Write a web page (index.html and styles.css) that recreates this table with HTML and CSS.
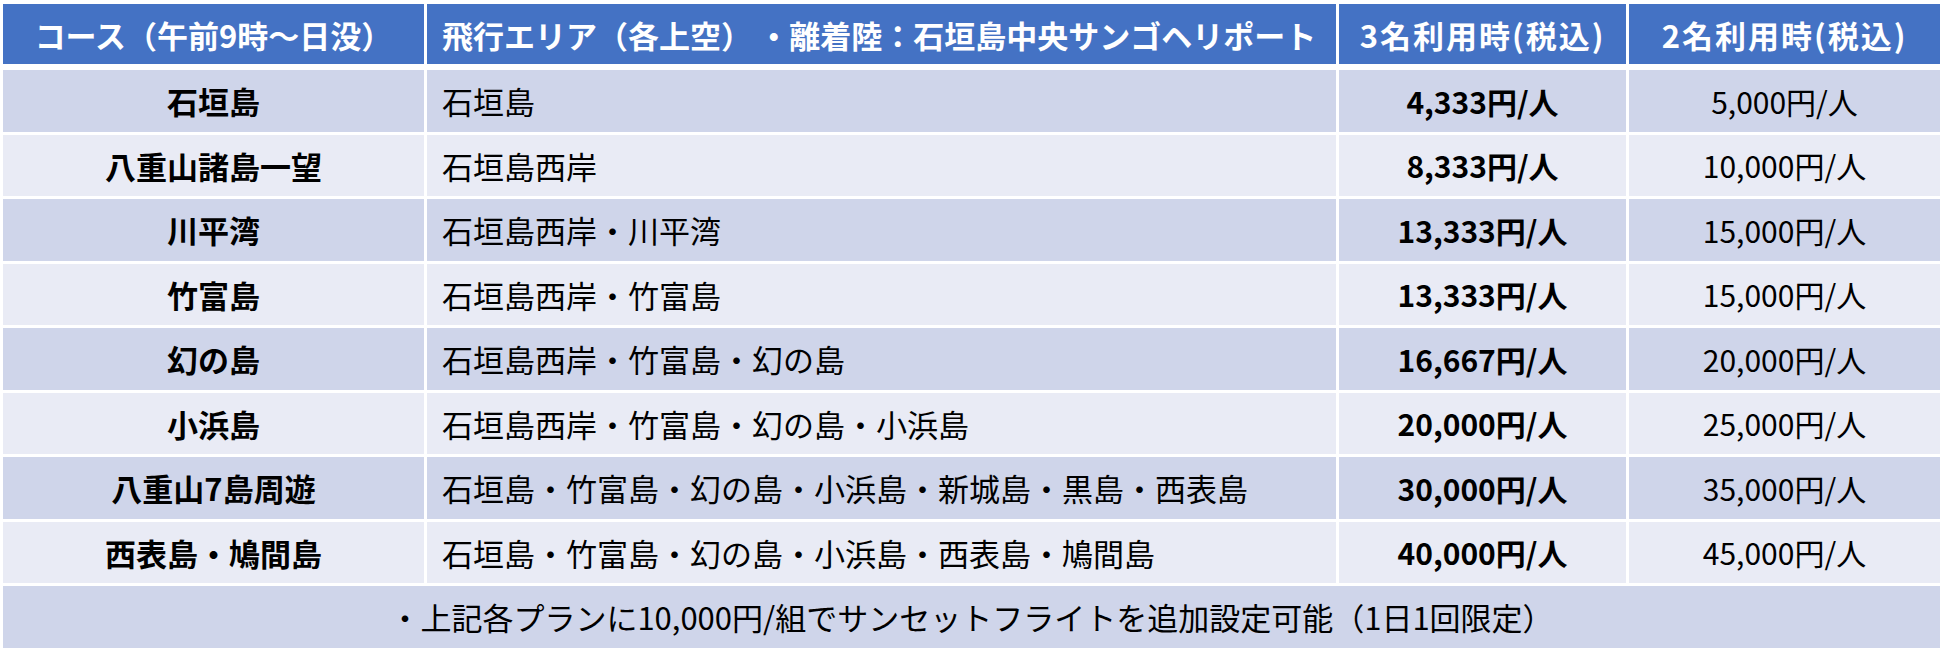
FILE: index.html
```html
<!DOCTYPE html>
<html lang="ja">
<head>
<meta charset="utf-8">
<title>料金表</title>
<link rel="stylesheet" href="styles.css">
</head>
<body>
<div class="price-table">
  <div class="grid head">
    <div class="cell c-center">コース（午前9時〜日没）</div>
    <div class="cell c-left">飛行エリア（各上空）&#8201;・離着陸：石垣島中央サンゴヘリポート</div>
    <div class="cell c-center spaced">3名利用時(税込)</div>
    <div class="cell c-center spaced">2名利用時(税込)</div>
  </div>
  <div class="grid body">
    <div class="cell odd c-center bold">石垣島</div>
    <div class="cell odd c-left">石垣島</div>
    <div class="cell odd c-center bold price">4,333円/人</div>
    <div class="cell odd c-center price">5,000円/人</div>

    <div class="cell even c-center bold">八重山諸島一望</div>
    <div class="cell even c-left">石垣島西岸</div>
    <div class="cell even c-center bold price">8,333円/人</div>
    <div class="cell even c-center price">10,000円/人</div>

    <div class="cell odd c-center bold">川平湾</div>
    <div class="cell odd c-left">石垣島西岸・川平湾</div>
    <div class="cell odd c-center bold price">13,333円/人</div>
    <div class="cell odd c-center price">15,000円/人</div>

    <div class="cell even c-center bold">竹富島</div>
    <div class="cell even c-left">石垣島西岸・竹富島</div>
    <div class="cell even c-center bold price">13,333円/人</div>
    <div class="cell even c-center price">15,000円/人</div>

    <div class="cell odd c-center bold">幻の島</div>
    <div class="cell odd c-left">石垣島西岸・竹富島・幻の島</div>
    <div class="cell odd c-center bold price">16,667円/人</div>
    <div class="cell odd c-center price">20,000円/人</div>

    <div class="cell even c-center bold">小浜島</div>
    <div class="cell even c-left">石垣島西岸・竹富島・幻の島・小浜島</div>
    <div class="cell even c-center bold price">20,000円/人</div>
    <div class="cell even c-center price">25,000円/人</div>

    <div class="cell odd c-center bold">八重山7島周遊</div>
    <div class="cell odd c-left">石垣島・竹富島・幻の島・小浜島・新城島・黒島・西表島</div>
    <div class="cell odd c-center bold price">30,000円/人</div>
    <div class="cell odd c-center price">35,000円/人</div>

    <div class="cell even c-center bold">西表島・鳩間島</div>
    <div class="cell even c-left">石垣島・竹富島・幻の島・小浜島・西表島・鳩間島</div>
    <div class="cell even c-center bold price">40,000円/人</div>
    <div class="cell even c-center price">45,000円/人</div>

    <div class="cell odd c-center span-all">・上記各プランに10,000円/組でサンセットフライトを追加設定可能（1日1回限定）</div>
  </div>
</div>
</body>
</html>
```
FILE: styles.css
```css
html, body {
  margin: 0;
  padding: 0;
  background: #ffffff;
}
body {
  font-family: "Noto Sans CJK JP", "Noto Sans", sans-serif;
  color: #000000;
}
.price-table {
  padding: 4px 0 0 3px;
  width: 1937px;
}
.grid {
  display: grid;
  grid-template-columns: 421px 909px 287px 1fr;
  column-gap: 3px;
  row-gap: 3px;
}
.head {
  grid-auto-rows: 60px;
}
.body {
  margin-top: 6px;
  grid-auto-rows: 61.5px;
}
.cell {
  display: flex;
  align-items: center;
  font-size: 31px;
  line-height: 1;
  white-space: nowrap;
}
.head .cell {
  background: #4472c4;
  color: #ffffff;
  font-weight: 700;
}
.head .spaced {
  letter-spacing: 2px;
}
.price {
  font-size: 30px;
}
.odd {
  background: #cfd5ea;
}
.even {
  background: #e9ebf5;
}
.c-center {
  justify-content: center;
}
.c-left {
  justify-content: flex-start;
  padding-left: 15px;
}
.bold {
  font-weight: 700;
}
.span-all {
  grid-column: 1 / -1;
}
```
